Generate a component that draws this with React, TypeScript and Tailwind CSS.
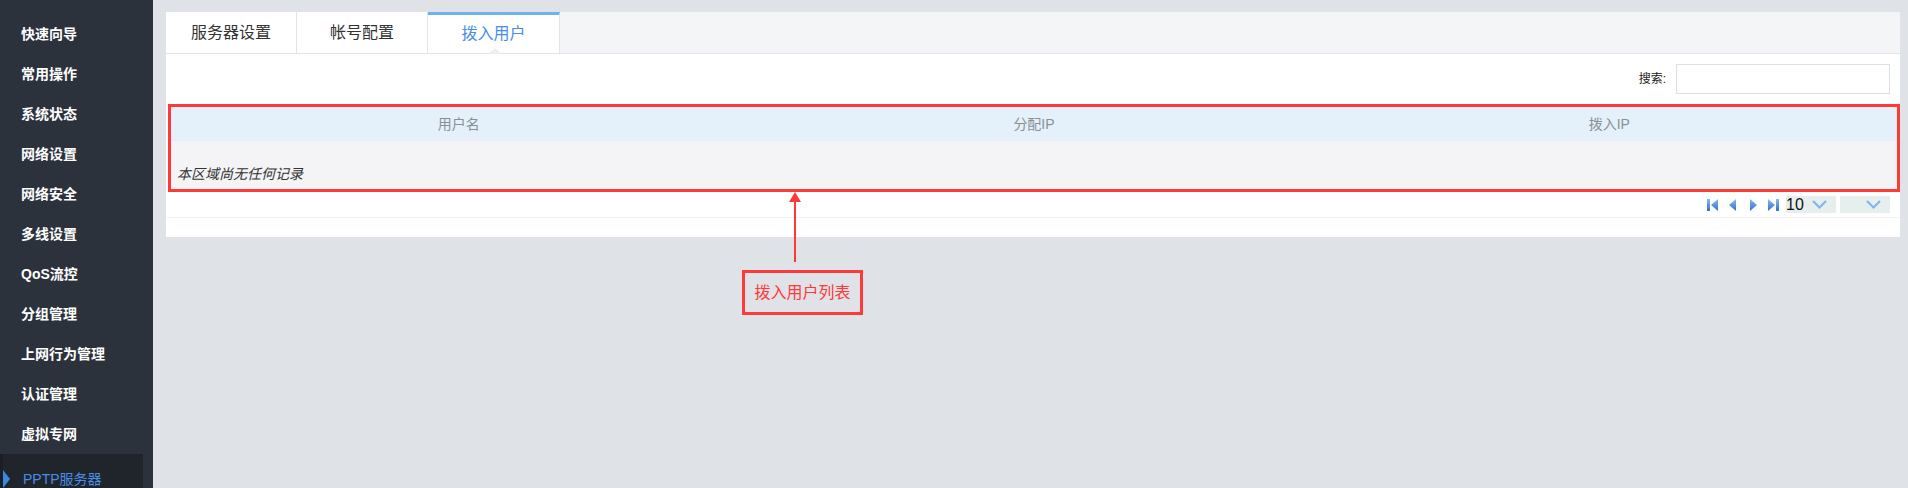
const menu = [
  "快速向导",
  "常用操作",
  "系统状态",
  "网络设置",
  "网络安全",
  "多线设置",
  "QoS流控",
  "分组管理",
  "上网行为管理",
  "认证管理",
  "虚拟专网",
];

const tabs = ["服务器设置", "帐号配置", "拨入用户"];
const cols = ["用户名", "分配IP", "拨入IP"];

const font = { fontFamily: '"Liberation Sans", "Noto Sans CJK SC", sans-serif' };

const PagerIcon = ({ dir, bar }: { dir: "l" | "r"; bar?: boolean }) => {
  const id = `g${dir}${bar ? "b" : ""}`;
  return (
    <svg width="12" height="14" viewBox="0 0 12 14">
      <defs>
        <linearGradient id={id} x1="0" y1="0" x2="0" y2="1">
          <stop offset="0" stopColor="#8bbaf2" />
          <stop offset="1" stopColor="#2f6fd0" />
        </linearGradient>
      </defs>
      {dir === "l" ? (
        <>
          {bar && <rect x="0" y="1" width="3" height="12" fill={`url(#${id})`} />}
          <polygon points={bar ? "11,1 4,7 11,13" : "9,1 2,7 9,13"} fill={`url(#${id})`} />
        </>
      ) : (
        <>
          <polygon points={bar ? "1,1 8,7 1,13" : "3,1 10,7 3,13"} fill={`url(#${id})`} />
          {bar && <rect x="9" y="1" width="3" height="12" fill={`url(#${id})`} />}
        </>
      )}
    </svg>
  );
};

const Chevron = () => (
  <svg width="15" height="9" viewBox="0 0 15 9">
    <polyline points="1,1 7.5,7.5 14,1" fill="none" stroke="#7fb6ef" strokeWidth="2" />
  </svg>
);

export default function App() {
  return (
    <div className="relative flex h-[488px] w-[1908px] overflow-hidden bg-[#dfe2e6]" style={font}>
      {/* 侧边菜单 */}
      <aside className="flex w-[153px] shrink-0 flex-col bg-[#2b323c] pt-[14px]">
        {menu.map((m) => (
          <div key={m} className="flex h-[40px] shrink-0 items-center pl-[21px] text-[14px] font-bold text-white">
            {m}
          </div>
        ))}
        <div className="relative flex h-[50px] w-[143px] shrink-0 items-center bg-[#20252b] pl-[23px] text-[14px] text-[#4a8de8]">
          <span className="absolute left-0 top-0 h-full w-[3px] bg-[#1b1f24]" />
          <span className="absolute left-[3px] top-[16px] h-0 w-0 border-y-[9px] border-l-[7px] border-y-transparent border-l-[#3f86e0]" />
          PPTP服务器
        </div>
      </aside>

      {/* 主体 */}
      <main className="flex-1 pl-[13px] pr-[8px] pt-[12px]">
        <div className="h-[225px] bg-white">
          {/* 标签 */}
          <div className="flex h-[42px] border-b border-[#e2e4e9] bg-[#f4f5f7]">
            {tabs.map((t, i) => {
              const active = i === 2;
              return (
                <div
                  key={t}
                  className={
                    active
                      ? "relative flex w-[132px] items-center justify-center border-r border-t-[3px] border-[#e2e4e9] border-t-[#6cb4ef] bg-white text-[16px] text-[#4a8de8]"
                      : "flex w-[131px] items-center justify-center border-r border-[#e2e4e9] bg-white text-[16px] text-[#333]"
                  }
                >
                  {t}
                  {active && (
                    <span className="absolute bottom-[-1px] left-[60px] h-0 w-0 border-x-[7px] border-b-[6px] border-x-transparent border-b-[#eceef1]" />
                  )}
                </div>
              );
            })}
          </div>

          {/* 搜索 */}
          <div className="flex h-[50px] items-center justify-end pr-[10px]">
            <span className="mr-[10px] text-[12px] text-[#222]">搜索:</span>
            <input className="h-[30px] w-[214px] border border-[#dcdfe4] bg-white outline-none" />
          </div>

          {/* 表格 */}
          <div className="ml-[2px] border-[3px] border-[#ff3838]">
            <div className="grid h-[34px] grid-cols-3 items-center bg-[#e4f1fa] text-[14px] text-[#8a8f96]">
              {cols.map((c) => (
                <div key={c} className="text-center">
                  {c}
                </div>
              ))}
            </div>
            <div className="flex h-[48px] items-end bg-[#f4f4f6] pb-[4px] pl-[6px] text-[14px] italic text-[#333]">
              本区域尚无任何记录
            </div>
          </div>

          {/* 分页 */}
          <div className="flex h-[26px] items-center justify-end border-b border-[#f2f3f5] pr-[10px]">
            <div className="flex items-center gap-[8px]">
              <PagerIcon dir="l" bar />
              <PagerIcon dir="l" />
              <PagerIcon dir="r" />
              <PagerIcon dir="r" bar />
            </div>
            <div className="ml-[7px] flex h-[17px] w-[50px] items-center justify-between bg-[#e6eeee] pr-[9px] text-[16px] leading-none text-[#111]">
              <span>10</span>
              <Chevron />
            </div>
            <div className="ml-[4px] flex h-[17px] w-[50px] items-center justify-end bg-[#e6eeee] pr-[9px]">
              <Chevron />
            </div>
          </div>
        </div>
      </main>

      {/* 标注 */}
      <div className="pointer-events-none absolute left-[789px] top-[192px] flex flex-col items-center">
        <span className="h-0 w-0 border-x-[6px] border-b-[10px] border-x-transparent border-b-[#ff3838]" />
        <span className="h-[60px] w-[2px] bg-[#ff3838]" />
      </div>
      <div className="absolute left-[742px] top-[270px] flex h-[45px] w-[121px] items-center justify-center border-[3px] border-[#ff3838] text-[16px] text-[#ff3838]">
        拨入用户列表
      </div>
    </div>
  );
}
